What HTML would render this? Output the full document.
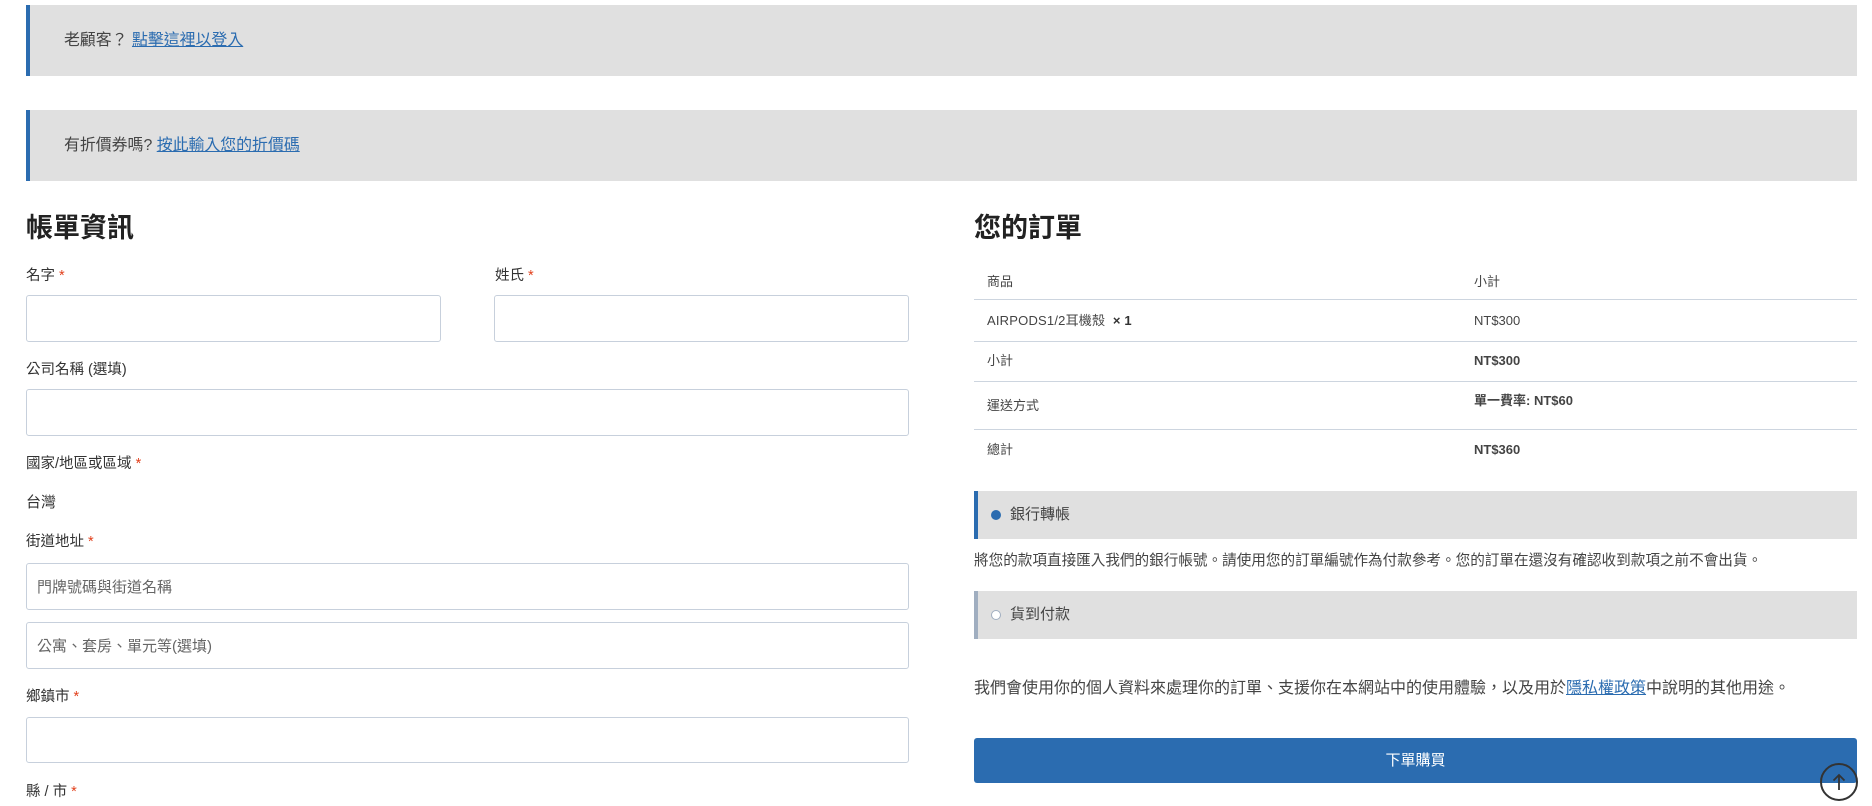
<!DOCTYPE html>
<html><head><meta charset="utf-8">
<style>
*{box-sizing:border-box;margin:0;padding:0}
body{width:1872px;height:806px;overflow:hidden;background:#fff;font-family:"Liberation Sans","Noto Sans CJK TC",sans-serif;color:#333;position:relative}
.a{position:absolute}
.notice{position:absolute;left:26px;width:1831px;height:71px;background:#e0e0e0;border-left:4px solid #2b6cb0;font-size:15.9px;line-height:71px;padding-left:34px;color:#444}
.notice a{color:#2b6cb0;text-decoration:underline}
h2{position:absolute;font-size:27px;font-weight:700;color:#222;line-height:1}
.lbl{position:absolute;left:26px;font-size:14.5px;color:#333;line-height:1}
.lbl b{color:#e2401c;font-weight:400}
.inp{position:absolute;border:1px solid #c7d0dc;border-radius:3px;background:#fff;font-size:15px;color:#666;padding-left:10px;display:flex;align-items:center}
.row{position:absolute;left:974px;width:883px;border-bottom:1px solid #cdd5df}
.t{position:absolute;font-size:13px;color:#444;line-height:1}
.pay{position:absolute;left:974px;width:883px;height:48px;background:#e0e0e0;border-left:4px solid #2b6cb0;font-size:15px;color:#444;line-height:48px;padding-left:32px}
.dot{position:absolute;left:13px;top:19px;width:10px;height:10px;border-radius:50%}
</style></head><body>
<div class="notice" style="top:5px">老顧客？ <a>點擊這裡以登入</a></div>
<div class="notice" style="top:110px">有折價券嗎? <a>按此輸入您的折價碼</a></div>

<h2 style="left:26px;top:215px">帳單資訊</h2>
<div class="lbl" style="top:269px">名字 <b>*</b></div>
<div class="lbl" style="top:269px;left:495px">姓氏 <b>*</b></div>
<div class="inp" style="left:26px;top:295px;width:415px;height:47px"></div>
<div class="inp" style="left:494px;top:295px;width:415px;height:47px"></div>
<div class="lbl" style="top:363px">公司名稱 (選填)</div>
<div class="inp" style="left:26px;top:389px;width:883px;height:47px"></div>
<div class="lbl" style="top:457px">國家/地區或區域 <b>*</b></div>
<div class="a" style="left:26px;top:491px;font-size:15px;color:#333">台灣</div>
<div class="lbl" style="top:535px">街道地址 <b>*</b></div>
<div class="inp" style="left:26px;top:563px;width:883px;height:47px">門牌號碼與街道名稱</div>
<div class="inp" style="left:26px;top:622px;width:883px;height:47px">公寓、套房、單元等(選填)</div>
<div class="lbl" style="top:690px">鄉鎮市 <b>*</b></div>
<div class="inp" style="left:26px;top:717px;width:883px;height:46px"></div>
<div class="lbl" style="top:785px">縣 / 市 <b>*</b></div>

<h2 style="left:974px;top:215px">您的訂單</h2>
<div class="t" style="left:987px;top:275px">商品</div>
<div class="t" style="left:1474px;top:275px">小計</div>
<div class="row" style="top:299px"></div>
<div class="t" style="left:987px;top:314px;letter-spacing:.2px">AIRPODS1/2耳機殼 &nbsp;<b style="color:#333">× 1</b></div>
<div class="t" style="left:1474px;top:314px">NT$300</div>
<div class="row" style="top:341px"></div>
<div class="t" style="left:987px;top:354px">小計</div>
<div class="t" style="left:1474px;top:354px;font-weight:700">NT$300</div>
<div class="row" style="top:381px"></div>
<div class="t" style="left:987px;top:399px">運送方式</div>
<div class="t" style="left:1474px;top:394px;font-weight:700">單一費率: NT$60</div>
<div class="row" style="top:429px"></div>
<div class="t" style="left:987px;top:443px">總計</div>
<div class="t" style="left:1474px;top:443px;font-weight:700">NT$360</div>

<div class="pay" style="top:491px"><span class="dot" style="background:#2b6cb0"></span>銀行轉帳</div>
<div class="t" style="left:974px;top:554px;font-size:14.6px">將您的款項直接匯入我們的銀行帳號。請使用您的訂單編號作為付款參考。您的訂單在還沒有確認收到款項之前不會出貨。</div>
<div class="pay" style="top:591px;border-left-color:#a0aec0"><span class="dot" style="border:1px solid #a0aec0;background:#fff"></span>貨到付款</div>
<div class="t" style="left:974px;top:681px;font-size:16px">我們會使用你的個人資料來處理你的訂單、支援你在本網站中的使用體驗，以及用於<span style="color:#2b6cb0;text-decoration:underline">隱私權政策</span>中說明的其他用途。</div>
<div class="a" style="left:974px;top:738px;width:883px;height:45px;background:#2b6cb0;border-radius:3px;color:#fff;font-size:15px;text-align:center;line-height:45px">下單購買</div>
<div class="a" style="left:1820px;top:763px;width:38px;height:38px;border:2px solid #333;border-radius:50%">
<svg width="34" height="34" viewBox="0 0 34 34" style="position:absolute;left:0;top:0"><path d="M17 25V10M11.5 15.5L17 10L22.5 15.5" stroke="#333" stroke-width="1.8" fill="none"/></svg>
</div>
</body></html>
